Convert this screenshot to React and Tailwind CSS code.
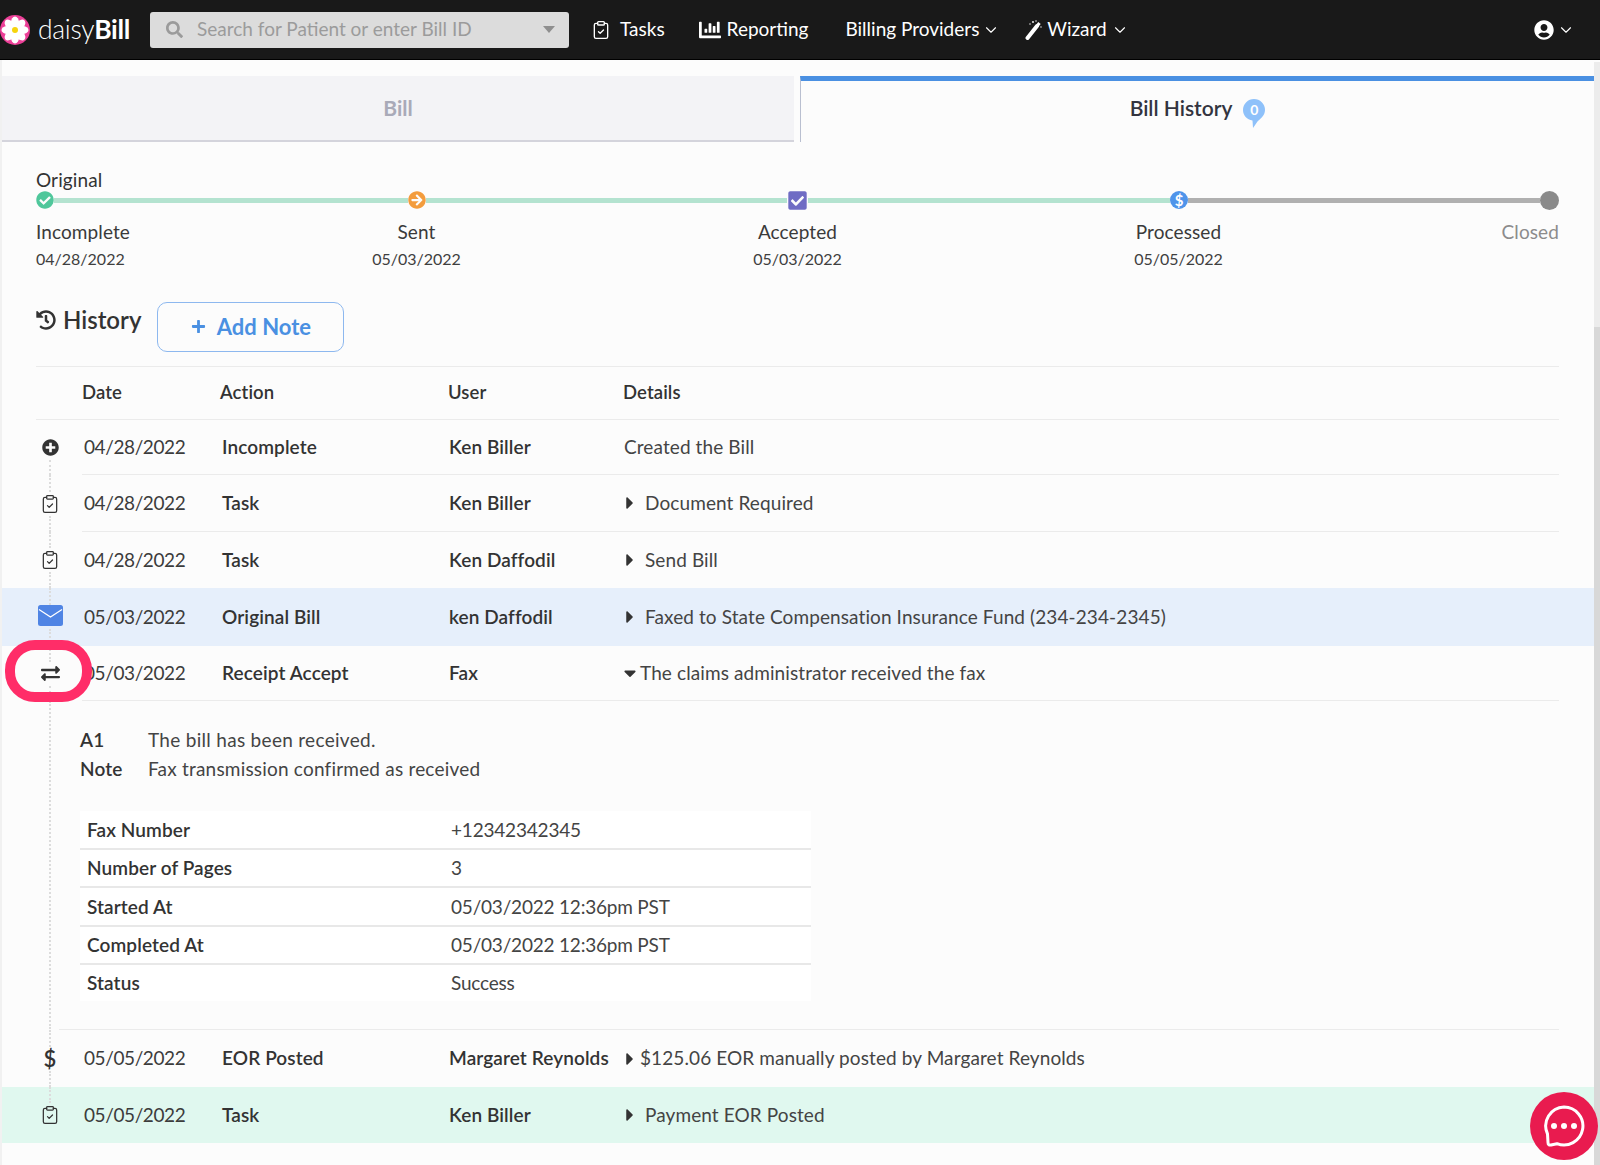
import React from "react";
import { ClipboardCheck, ChevronDown } from "lucide-react";
import {
  FaSearch, FaChartBar, FaUserCircle, FaCheckCircle, FaArrowCircleRight,
  FaCheckSquare, FaHistory, FaPlus, FaPlusCircle, FaExchangeAlt, FaCaretRight, FaCaretDown,
} from "react-icons/fa";

function Logo() {
  const petals = [0, 45, 90, 135, 180, 225, 270, 315];
  return (
    <svg width="30" height="32" viewBox="0 0 30 32" className="shrink-0">
      <circle cx="15" cy="16" r="15" fill="#ec3f97" />
      {petals.map((a) => (
        <ellipse key={a} cx="15" cy="8.5" rx="4" ry="6" fill="#fff" transform={`rotate(${a} 15 16)`} />
      ))}
      <circle cx="15" cy="16" r="3" fill="#f6d40d" />
    </svg>
  );
}

function Wand() {
  return (
    <svg width="17" height="20" viewBox="0 0 17 20" fill="none" className="shrink-0">
      <path d="M2.500 18 L12 6" stroke="#fff" strokeWidth="4" strokeLinecap="round" />
      <path d="M12.500 5.500 L14.500 3" stroke="#fff" strokeWidth="3" />
      <circle cx="8" cy="2" r="0.9" fill="#fff" />
      <circle cx="5" cy="4" r="0.7" fill="#fff" />
      <circle cx="11" cy="1" r="0.7" fill="#fff" />
      <circle cx="16" cy="7" r="0.7" fill="#fff" />
    </svg>
  );
}

function Mail() {
  return (
    <svg width="25" height="21" viewBox="0 0 25 21" fill="none" className="mb-[4px]">
      <rect x="0" y="0" width="25" height="21" rx="2.500" fill="#4f84e4" />
      <path d="M1 4.500 L12.500 12 L24 4.500" stroke="#fff" strokeWidth="1.300" />
    </svg>
  );
}

function Dots({ hidden }) {
  return <div className={`flex-1 w-0 border-l-2 border-dotted ${hidden ? "border-transparent" : "border-[#dcdcdc]"}`} />;
}

const clip = <ClipboardCheck size={20} strokeWidth={1.5} className="text-[#333]" />;

function Row({ icon, date, action, user, detail, caret, bg, first, last, noBorder, h }) {
  return (
    <div className={`flex pr-[35px] ${h} ${bg || ""}`}>
      <div className="w-[80px] pl-[16px] flex flex-col items-center shrink-0">
        <Dots hidden={first} />
        <div className="h-[24px] flex items-center justify-center">{icon}</div>
        <Dots hidden={last} />
      </div>
      <div className={`flex-1 flex items-center pl-[2px] text-[19px] tracking-[0.1px] ${noBorder ? "" : "border-b border-[#ebebeb]"}`}>
        <div className="w-[138px] text-[#3c3c3c] tracking-[-0.4px]">{date}</div>
        <div className="w-[227px] font-semibold text-[#333]">{action}</div>
        <div className="w-[175px] font-semibold text-[#333]">{user}</div>
        <div className="flex items-center text-[#444]">
          {caret === "right" && <FaCaretRight size={20} className="ml-[2px] w-[8px] text-[#333] mr-[11px]" />}
          {caret === "rightTight" && <FaCaretRight size={20} className="ml-[2px] w-[8px] text-[#333] mr-[6px]" />}
          {caret === "down" && <FaCaretDown size={20} className="w-[12px] text-[#333] mr-[4px]" />}
          <span>{detail}</span>
        </div>
      </div>
    </div>
  );
}

function Label({ title, date, align, muted }) {
  return (
    <div className={align}>
      <div className={`text-[19px] leading-[24px] tracking-[0.1px] ${muted ? "text-[#8c8c8c]" : "text-[#3a3a3a]"}`}>{title}</div>
      {date && <div className="text-[16px] leading-[22px] mt-[4px] text-[#3f3f3f]">{date}</div>}
    </div>
  );
}

const faxRows = [
  ["Fax Number", "+12342342345", "h-[38.5px] border-b-2"],
  ["Number of Pages", "3", "h-[38.5px] border-b-2"],
  ["Started At", "05/03/2022 12:36pm PST", "h-[38.5px] border-b-2"],
  ["Completed At", "05/03/2022 12:36pm PST", "h-[38.5px] border-b-2"],
  ["Status", "Success", "h-[36px]"],
];

export default function App() {
  return (
    <div className="relative w-[1600px] h-[1165px] overflow-hidden flex flex-col bg-[#fcfcfc] font-[Lato,sans-serif]">
      {/* Nav */}
      <header className="h-[60px] shrink-0 bg-[#191919] border-b border-black flex items-center text-white text-[19px]">
        <Logo />
        <div className="ml-[8px] w-[92px] text-[26.5px] leading-none tracking-[-0.3px] whitespace-nowrap">
          <span className="font-light">daisy</span><span className="font-bold">Bill</span>
        </div>
        <div className="ml-[20px] w-[419px] h-[36px] rounded-[3px] bg-[#dcdcdc] flex items-center text-[#9b9b9b]">
          <FaSearch size={17} className="ml-[16px] mr-[14px]" />
          <span className="text-[19px]">Search for Patient or enter Bill ID</span>
          <span className="ml-auto mr-[14px] w-0 h-0 border-x-[6px] border-x-transparent border-t-[7px] border-t-[#8f8f8f]" />
        </div>
        <ClipboardCheck size={20} strokeWidth={1.6} className="ml-[22px]" />
        <span className="ml-[9px]">Tasks</span>
        <FaChartBar size={22} className="ml-[34px]" />
        <span className="ml-[6px]">Reporting</span>
        <span className="ml-[37px]">Billing Providers</span>
        <ChevronDown size={18} strokeWidth={1.5} className="ml-[3px]" />
        <div className="ml-[25px]"><Wand /></div>
        <span className="ml-[5px]">Wizard</span>
        <ChevronDown size={18} strokeWidth={1.5} className="ml-[4px]" />
        <FaUserCircle size={20} className="ml-auto" />
        <ChevronDown size={18} strokeWidth={1.5} className="ml-[3px] mr-[25px]" />
      </header>

      <div className="flex-1 flex min-h-0">
        <main className="flex-1 min-w-0 pt-[16px] border-l-2 border-[#f1f1f1]">
          {/* Tabs */}
          <div className="flex h-[66px]">
            <div className="w-[792px] bg-[#f3f3f6] border-b-2 border-[#d4d4dc] flex items-center justify-center text-[#a9aab8] text-[21px] font-bold">
              Bill
            </div>
            <div className="ml-[6px] flex-1 border-t-[5px] border-t-[#4a90e2] border-l border-l-[#b9bfd0] flex items-center justify-center gap-[11px] text-[#33343f] text-[21px] font-semibold pb-[8px]">
              <span>Bill History</span>
              <span className="relative mt-[12px] flex items-center justify-center w-[22px] h-[29px]">
                <svg width="22" height="29" viewBox="0 0 22 29" className="shrink-0">
                  <path d="M11 0a11 11 0 0 1 11 11c0 6-5 9-7.500 11.500L10 29l-.500-7.500C4 20.500 0 16.500 0 11A11 11 0 0 1 11 0z" fill="#8ec1fa" />
                </svg>
                <span className="absolute top-[2px] text-[14px] leading-[18px] font-bold text-white">0</span>
              </span>
            </div>
          </div>

          {/* Timeline */}
          <section className="pl-[34px] pr-[35px] pt-[26px]">
            <div className="text-[19px] leading-[24px] tracking-[0.1px] text-[#333]">Original</div>
            <div className="flex items-center h-[20px] mt-[-2px]">
              <FaCheckCircle size={18} className="shrink-0 text-[#4fc79b]" />
              <div className="w-[354px] h-[5px] bg-[#b4e3d0]" />
              <FaArrowCircleRight size={18} className="shrink-0 text-[#f39c3d]" />
              <div className="w-[361px] h-[5px] bg-[#b4e3d0]" />
              <FaCheckSquare size={21} className="shrink-0 text-[#6f6cc4]" />
              <div className="w-[362px] h-[5px] bg-[#b4e3d0]" />
              <span className="shrink-0 w-[18px] h-[18px] rounded-full bg-[#4f94ea] flex items-center justify-center text-white text-[15px] leading-none font-bold">$</span>
              <div className="flex-1 h-[5px] bg-[#b0b0b0]" />
              <span className="shrink-0 w-[19px] h-[19px] rounded-full bg-[#8a8a8a]" />
            </div>
            <div className="grid grid-cols-[190px_381px_381px_381px_190px] mt-[10px]">
              <Label title="Incomplete" date="04/28/2022" align="text-left" />
              <Label title="Sent" date="05/03/2022" align="text-center" />
              <Label title="Accepted" date="05/03/2022" align="text-center" />
              <Label title="Processed" date="05/05/2022" align="text-center" />
              <Label title="Closed" align="text-right" muted />
            </div>

            <div className="flex items-start mt-[32px]">
              <div className="flex items-center h-[36px] text-[#333]">
                <FaHistory size={20} />
                <span className="ml-[7px] text-[24px] font-semibold">History</span>
              </div>
              <button className="ml-[16px] w-[187px] h-[50px] border border-[#8db8ef] rounded-[10px] flex items-center justify-center gap-[11px] text-[#4a90e2] text-[22px] font-bold pb-[2px]">
                <FaPlus size={15} />
                Add Note
              </button>
            </div>
          </section>

          {/* Table header */}
          <div className="ml-[34px] mr-[35px] mt-[14px] h-[54px] border-y border-[#ebebeb] flex items-center pl-[46px] text-[18.5px] tracking-[0.1px] font-semibold text-[#333]">
            <div className="w-[138px]">Date</div>
            <div className="w-[228px]">Action</div>
            <div className="w-[175px]">User</div>
            <div>Details</div>
          </div>

          <Row h="h-[55px]" first icon={<FaPlusCircle size={17} className="text-[#333]" />} date="04/28/2022" action="Incomplete" user="Ken Biller" detail="Created the Bill" />
          <Row h="h-[57px]" icon={clip} date="04/28/2022" action="Task" user="Ken Biller" caret="right" detail="Document Required" />
          <Row h="h-[56px]" icon={clip} date="04/28/2022" action="Task" user="Ken Daffodil" caret="right" detail="Send Bill" noBorder />
          <Row h="h-[58px]" bg="bg-[#e6effb]" noBorder icon={<Mail />} date="05/03/2022" action="Original Bill" user="ken Daffodil" caret="right" detail="Faxed to State Compensation Insurance Fund (234-234-2345)" />
          <Row h="h-[55px]" icon={<FaExchangeAlt size={19} className="text-[#333]" />} date="05/03/2022" action="Receipt Accept" user="Fax" caret="down" detail="The claims administrator received the fax" />

          {/* Expanded detail */}
          <div className="flex h-[328px] pr-[35px]">
            <div className="w-[78px] pl-[18px] flex flex-col items-center shrink-0">
              <Dots />
            </div>
            <div className="flex-1 flex flex-col text-[19px] tracking-[0.1px] text-[#444]">
              <div className="pt-[27px] flex flex-col gap-[5px] pb-[30px]">
                <div className="flex h-[24px] items-center"><span className="w-[68px] font-semibold text-[#333]">A1</span><span className="tracking-[0.3px]">The bill has been received.</span></div>
                <div className="flex h-[24px] items-center"><span className="w-[68px] font-semibold text-[#333]">Note</span><span className="tracking-[0.2px]">Fax transmission confirmed as received</span></div>
              </div>
              <div className="w-[731px] bg-white">
                {faxRows.map(([k, v, c]) => (
                  <div key={k} className={`flex items-center pt-[1px] border-[#e8e8e8] ${c}`}>
                    <span className="w-[371px] pl-[7px] font-semibold text-[#333]">{k}</span>
                    <span className="tracking-[-0.2px]">{v}</span>
                  </div>
                ))}
              </div>
            </div>
          </div>

          <div className="ml-[57px] mr-[35px] border-t border-[#ebebeb]" />
          <Row h="h-[57px]" noBorder icon={<span className="text-[22px] leading-none font-semibold text-[#333]">$</span>} date="05/05/2022" action="EOR Posted" user="Margaret Reynolds" caret="rightTight" detail="$125.06 EOR manually posted by Margaret Reynolds" />
          <Row h="h-[56px]" last bg="bg-[#e0f8ef]" noBorder icon={clip} date="05/05/2022" action="Task" user="Ken Biller" caret="right" detail="Payment EOR Posted" />
        </main>

        {/* Scrollbar */}
        <div className="w-[6px] shrink-0 bg-[#ececec] mt-[2px] pt-[265px] flex flex-col">
          <div className="flex-1 bg-[#d8d8d8]" />
        </div>
      </div>

      {/* Highlight ring */}
      <div className="absolute left-[5px] top-[640px] w-[87px] h-[62px] rounded-[30px] border-[10px] border-[#ff2d68]" />

      {/* Chat */}
      <button className="absolute left-[1530px] top-[1092px] w-[68px] h-[68px] rounded-full bg-[#e91b4f] flex items-center justify-center">
        <svg width="44" height="44" viewBox="0 0 44 44" fill="none">
          <path d="M22 3a19 19 0 1 1-7 36.700L9 41c-2 .400-3-.600-3-2.500L5.500 30A19 19 0 0 1 22 3z" stroke="#fff" strokeWidth="3" strokeLinejoin="round" />
          <circle cx="12" cy="22" r="3" fill="#fff" />
          <circle cx="22" cy="22" r="3" fill="#fff" />
          <circle cx="32" cy="22" r="3" fill="#fff" />
        </svg>
      </button>
    </div>
  );
}
